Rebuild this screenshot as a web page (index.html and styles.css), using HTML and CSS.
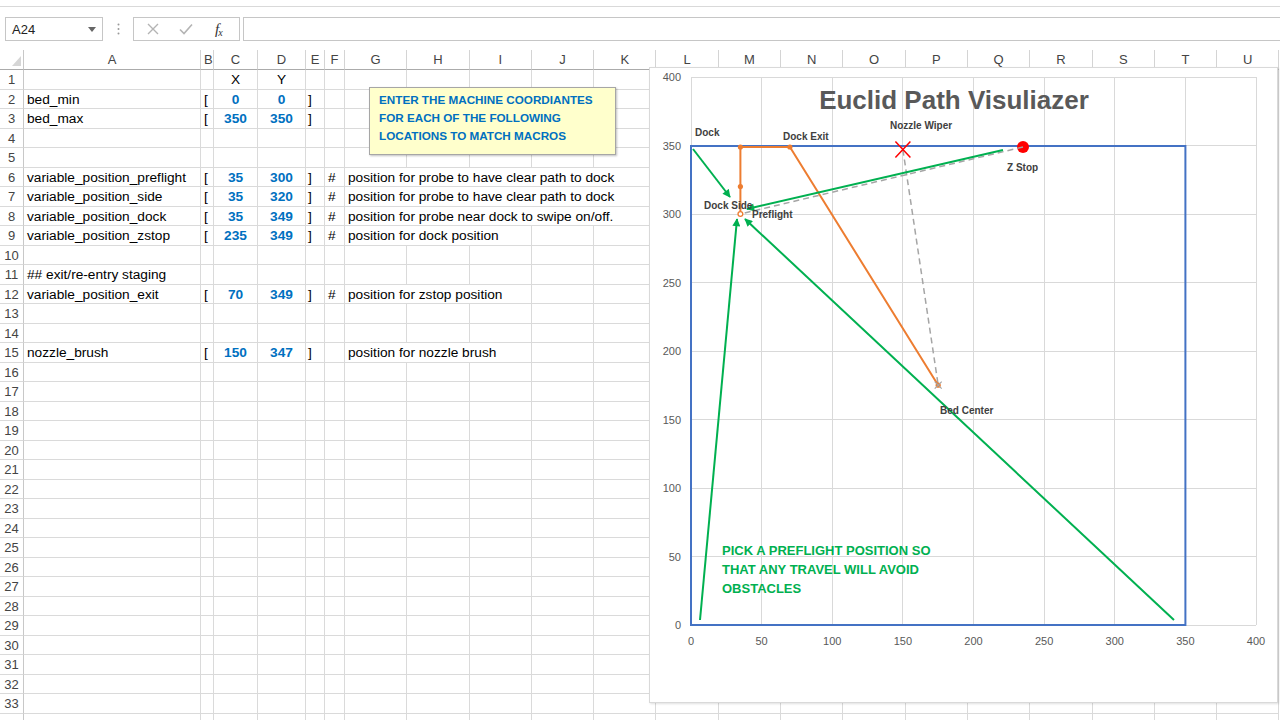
FILE: index.html
```html
<!DOCTYPE html>
<html lang="en">
<head>
<meta charset="utf-8">
<title>Euclid Path Visualizer</title>
<link rel="stylesheet" href="styles.css">
</head>
<body>
<div class="ribbon-edge"></div>
<div class="formula-bar">
  <div class="name-box"><span>A24</span><svg class="dd" width="8" height="5" viewBox="0 0 8 5"><path d="M0 0h8L4 5z" fill="#666"/></svg></div>
  <div class="grip"><svg width="3" height="12" viewBox="0 0 3 12"><circle cx="1.5" cy="1.5" r="1" fill="#999"/><circle cx="1.5" cy="6" r="1" fill="#999"/><circle cx="1.5" cy="10.5" r="1" fill="#999"/></svg></div>
  <div class="fx-buttons">
    <svg class="btn-x" width="12" height="12" viewBox="0 0 12 12"><path d="M1 1L11 11M11 1L1 11" stroke="#b4b4b4" stroke-width="1.4" fill="none"/></svg>
    <svg class="btn-ok" width="14" height="12" viewBox="0 0 14 12"><path d="M1 6.5L5 10.5L13 1.5" stroke="#b4b4b4" stroke-width="1.6" fill="none"/></svg>
    <span class="fx">f<span class="fx-sub">x</span></span>
  </div>
  <div class="formula-input"></div>
</div>

<div class="sheet-wrap">
  <div class="sheet">
    <div class="corner"><svg width="9" height="10" viewBox="0 0 9 10"><path d="M9 0V10H0z" fill="#d6d6d6"/></svg></div>
    <div class="ch">A</div><div class="ch">B</div><div class="ch">C</div><div class="ch">D</div><div class="ch">E</div><div class="ch">F</div><div class="ch">G</div><div class="ch">H</div><div class="ch">I</div><div class="ch">J</div><div class="ch">K</div><div class="ch">L</div><div class="ch">M</div><div class="ch">N</div><div class="ch">O</div><div class="ch">P</div><div class="ch">Q</div><div class="ch">R</div><div class="ch">S</div><div class="ch">T</div><div class="ch">U</div>

    <div class="rh">1</div><div></div><div></div><div class="ctr">X</div><div class="ctr">Y</div><div></div><div></div><div></div><div></div><div></div><div></div><div></div><div></div><div></div><div></div><div></div><div></div><div></div><div></div><div></div><div></div><div></div>

    <div class="rh">2</div><div>bed_min</div><div>[</div><div class="n">0</div><div class="n">0</div><div class="br">]</div><div></div><div></div><div></div><div></div><div></div><div></div><div></div><div></div><div></div><div></div><div></div><div></div><div></div><div></div><div></div><div></div>

    <div class="rh">3</div><div>bed_max</div><div>[</div><div class="n">350</div><div class="n">350</div><div class="br">]</div><div></div><div></div><div></div><div></div><div></div><div></div><div></div><div></div><div></div><div></div><div></div><div></div><div></div><div></div><div></div><div></div>

    <div class="rh">4</div><div></div><div></div><div></div><div></div><div></div><div></div><div></div><div></div><div></div><div></div><div></div><div></div><div></div><div></div><div></div><div></div><div></div><div></div><div></div><div></div><div></div>
    <div class="rh">5</div><div></div><div></div><div></div><div></div><div></div><div></div><div></div><div></div><div></div><div></div><div></div><div></div><div></div><div></div><div></div><div></div><div></div><div></div><div></div><div></div><div></div>

    <div class="rh">6</div><div>variable_position_preflight</div><div>[</div><div class="n">35</div><div class="n">300</div><div class="br">]</div><div>#</div><div class="span5">position for probe to have clear path to dock</div><div></div><div></div><div></div><div></div><div></div><div></div><div></div><div></div><div></div><div></div>

    <div class="rh">7</div><div>variable_position_side</div><div>[</div><div class="n">35</div><div class="n">320</div><div class="br">]</div><div>#</div><div class="span5">position for probe to have clear path to dock</div><div></div><div></div><div></div><div></div><div></div><div></div><div></div><div></div><div></div><div></div>

    <div class="rh">8</div><div>variable_position_dock</div><div>[</div><div class="n">35</div><div class="n">349</div><div class="br">]</div><div>#</div><div class="span5">position for probe near dock to swipe on/off.</div><div></div><div></div><div></div><div></div><div></div><div></div><div></div><div></div><div></div><div></div>

    <div class="rh">9</div><div>variable_position_zstop</div><div>[</div><div class="n">235</div><div class="n">349</div><div class="br">]</div><div>#</div><div class="span3">position for dock position</div><div></div><div></div><div></div><div></div><div></div><div></div><div></div><div></div><div></div><div></div><div></div><div></div>

    <div class="rh">10</div><div></div><div></div><div></div><div></div><div></div><div></div><div></div><div></div><div></div><div></div><div></div><div></div><div></div><div></div><div></div><div></div><div></div><div></div><div></div><div></div><div></div>

    <div class="rh">11</div><div>## exit/re-entry staging</div><div></div><div></div><div></div><div></div><div></div><div></div><div></div><div></div><div></div><div></div><div></div><div></div><div></div><div></div><div></div><div></div><div></div><div></div><div></div><div></div>

    <div class="rh">12</div><div>variable_position_exit</div><div>[</div><div class="n">70</div><div class="n">349</div><div class="br">]</div><div>#</div><div class="span3">position for zstop position</div><div></div><div></div><div></div><div></div><div></div><div></div><div></div><div></div><div></div><div></div><div></div><div></div>

    <div class="rh">13</div><div></div><div></div><div></div><div></div><div></div><div></div><div></div><div></div><div></div><div></div><div></div><div></div><div></div><div></div><div></div><div></div><div></div><div></div><div></div><div></div><div></div>
    <div class="rh">14</div><div></div><div></div><div></div><div></div><div></div><div></div><div></div><div></div><div></div><div></div><div></div><div></div><div></div><div></div><div></div><div></div><div></div><div></div><div></div><div></div><div></div>

    <div class="rh">15</div><div>nozzle_brush</div><div>[</div><div class="n">150</div><div class="n">347</div><div class="br">]</div><div></div><div class="span3">position for nozzle brush</div><div></div><div></div><div></div><div></div><div></div><div></div><div></div><div></div><div></div><div></div><div></div><div></div>

    <div class="rh">16</div><div></div><div></div><div></div><div></div><div></div><div></div><div></div><div></div><div></div><div></div><div></div><div></div><div></div><div></div><div></div><div></div><div></div><div></div><div></div><div></div><div></div>
    <div class="rh">17</div><div></div><div></div><div></div><div></div><div></div><div></div><div></div><div></div><div></div><div></div><div></div><div></div><div></div><div></div><div></div><div></div><div></div><div></div><div></div><div></div><div></div>
    <div class="rh">18</div><div></div><div></div><div></div><div></div><div></div><div></div><div></div><div></div><div></div><div></div><div></div><div></div><div></div><div></div><div></div><div></div><div></div><div></div><div></div><div></div><div></div>
    <div class="rh">19</div><div></div><div></div><div></div><div></div><div></div><div></div><div></div><div></div><div></div><div></div><div></div><div></div><div></div><div></div><div></div><div></div><div></div><div></div><div></div><div></div><div></div>
    <div class="rh">20</div><div></div><div></div><div></div><div></div><div></div><div></div><div></div><div></div><div></div><div></div><div></div><div></div><div></div><div></div><div></div><div></div><div></div><div></div><div></div><div></div><div></div>
    <div class="rh">21</div><div></div><div></div><div></div><div></div><div></div><div></div><div></div><div></div><div></div><div></div><div></div><div></div><div></div><div></div><div></div><div></div><div></div><div></div><div></div><div></div><div></div>
    <div class="rh">22</div><div></div><div></div><div></div><div></div><div></div><div></div><div></div><div></div><div></div><div></div><div></div><div></div><div></div><div></div><div></div><div></div><div></div><div></div><div></div><div></div><div></div>
    <div class="rh">23</div><div></div><div></div><div></div><div></div><div></div><div></div><div></div><div></div><div></div><div></div><div></div><div></div><div></div><div></div><div></div><div></div><div></div><div></div><div></div><div></div><div></div>
    <div class="rh">24</div><div></div><div></div><div></div><div></div><div></div><div></div><div></div><div></div><div></div><div></div><div></div><div></div><div></div><div></div><div></div><div></div><div></div><div></div><div></div><div></div><div></div>
    <div class="rh">25</div><div></div><div></div><div></div><div></div><div></div><div></div><div></div><div></div><div></div><div></div><div></div><div></div><div></div><div></div><div></div><div></div><div></div><div></div><div></div><div></div><div></div>
    <div class="rh">26</div><div></div><div></div><div></div><div></div><div></div><div></div><div></div><div></div><div></div><div></div><div></div><div></div><div></div><div></div><div></div><div></div><div></div><div></div><div></div><div></div><div></div>
    <div class="rh">27</div><div></div><div></div><div></div><div></div><div></div><div></div><div></div><div></div><div></div><div></div><div></div><div></div><div></div><div></div><div></div><div></div><div></div><div></div><div></div><div></div><div></div>
    <div class="rh">28</div><div></div><div></div><div></div><div></div><div></div><div></div><div></div><div></div><div></div><div></div><div></div><div></div><div></div><div></div><div></div><div></div><div></div><div></div><div></div><div></div><div></div>
    <div class="rh">29</div><div></div><div></div><div></div><div></div><div></div><div></div><div></div><div></div><div></div><div></div><div></div><div></div><div></div><div></div><div></div><div></div><div></div><div></div><div></div><div></div><div></div>
    <div class="rh">30</div><div></div><div></div><div></div><div></div><div></div><div></div><div></div><div></div><div></div><div></div><div></div><div></div><div></div><div></div><div></div><div></div><div></div><div></div><div></div><div></div><div></div>
    <div class="rh">31</div><div></div><div></div><div></div><div></div><div></div><div></div><div></div><div></div><div></div><div></div><div></div><div></div><div></div><div></div><div></div><div></div><div></div><div></div><div></div><div></div><div></div>
    <div class="rh">32</div><div></div><div></div><div></div><div></div><div></div><div></div><div></div><div></div><div></div><div></div><div></div><div></div><div></div><div></div><div></div><div></div><div></div><div></div><div></div><div></div><div></div>
    <div class="rh">33</div><div></div><div></div><div></div><div></div><div></div><div></div><div></div><div></div><div></div><div></div><div></div><div></div><div></div><div></div><div></div><div></div><div></div><div></div><div></div><div></div><div></div>
    <div class="rh"></div><div></div><div></div><div></div><div></div><div></div><div></div><div></div><div></div><div></div><div></div><div></div><div></div><div></div><div></div><div></div><div></div><div></div><div></div><div></div><div></div><div></div>
  </div>

  <div class="note">ENTER THE MACHINE COORDIANTES<br>FOR EACH OF THE FOLLOWING<br>LOCATIONS TO MATCH MACROS</div>

  <div class="chart">
    <svg class="plot" width="627" height="634" viewBox="0 0 627 634">
      <defs>
        <marker id="ah" viewBox="0 0 10 10" refX="9" refY="5" markerWidth="9" markerHeight="8" markerUnits="userSpaceOnUse" orient="auto">
          <path d="M0 0L10 5L0 10z" fill="#00b050"/>
        </marker>
      </defs>
      <g transform="translate(-650,-68)">
        <g class="grid" stroke="#d9d9d9" stroke-width="1" shape-rendering="crispEdges">
          <line x1="691" y1="77" x2="691" y2="625"/>
          <line x1="761.6" y1="77" x2="761.6" y2="625"/>
          <line x1="832.3" y1="77" x2="832.3" y2="625"/>
          <line x1="902.9" y1="77" x2="902.9" y2="625"/>
          <line x1="973.5" y1="77" x2="973.5" y2="625"/>
          <line x1="1044.1" y1="77" x2="1044.1" y2="625"/>
          <line x1="1114.8" y1="77" x2="1114.8" y2="625"/>
          <line x1="1185.4" y1="77" x2="1185.4" y2="625"/>
          <line x1="1256" y1="77" x2="1256" y2="625"/>
          <line x1="691" y1="77" x2="1256" y2="77"/>
          <line x1="691" y1="145.5" x2="1256" y2="145.5"/>
          <line x1="691" y1="214" x2="1256" y2="214"/>
          <line x1="691" y1="282.5" x2="1256" y2="282.5"/>
          <line x1="691" y1="351" x2="1256" y2="351"/>
          <line x1="691" y1="419.5" x2="1256" y2="419.5"/>
          <line x1="691" y1="488" x2="1256" y2="488"/>
          <line x1="691" y1="556.5" x2="1256" y2="556.5"/>
          <line x1="691" y1="625" x2="1256" y2="625"/>
        </g>

        <g class="axis-y" font-size="11" fill="#595959" text-anchor="end">
          <text x="681" y="81">400</text>
          <text x="681" y="149.5">350</text>
          <text x="681" y="218">300</text>
          <text x="681" y="286.5">250</text>
          <text x="681" y="355">200</text>
          <text x="681" y="423.5">150</text>
          <text x="681" y="492">100</text>
          <text x="681" y="560.5">50</text>
          <text x="681" y="629">0</text>
        </g>
        <g class="axis-x" font-size="11" fill="#595959" text-anchor="middle">
          <text x="691" y="645">0</text>
          <text x="761.6" y="645">50</text>
          <text x="832.3" y="645">100</text>
          <text x="902.9" y="645">150</text>
          <text x="973.5" y="645">200</text>
          <text x="1044.1" y="645">250</text>
          <text x="1114.8" y="645">300</text>
          <text x="1185.4" y="645">350</text>
          <text x="1256" y="645">400</text>
        </g>

        <text class="title" x="954" y="109" text-anchor="middle">Euclid Path Visuliazer</text>

        <rect x="691" y="146" width="494.4" height="479" fill="none" stroke="#4472c4" stroke-width="2"/>

        <circle cx="1023" cy="147" r="6" fill="#ff0000"/>

        <g stroke="#a5a5a5" stroke-width="1.5" stroke-dasharray="6 4" fill="none">
          <line x1="1023" y1="147" x2="740.4" y2="214"/>
          <line x1="902.9" y1="149.6" x2="938.2" y2="385.2"/>
        </g>

        <polyline points="740.4,214 740.4,186.6 740.4,147 789.9,147 938.2,385.2" fill="none" stroke="#ed7d31" stroke-width="2"/>
        <g fill="#ed7d31">
          <circle cx="740.4" cy="186.6" r="2.6"/>
          <circle cx="740.4" cy="147" r="2.6"/>
          <circle cx="789.9" cy="147" r="2.6"/>
          <circle cx="938.2" cy="385.2" r="2.6"/>
        </g>
        <circle cx="740.4" cy="214" r="2.4" fill="#fff" stroke="#ed7d31" stroke-width="1.3"/>
        <path d="M934.7 381.7L941.7 388.7M941.7 381.7L934.7 388.7" stroke="#a5a5a5" stroke-width="1.2"/>

        <path d="M895.4 141.6L910.4 157.6M910.4 141.6L895.4 157.6" stroke="#ff0000" stroke-width="1.5" fill="none"/>

        <g stroke="#00b050" stroke-width="2" fill="none" marker-end="url(#ah)">
          <line x1="693" y1="149" x2="730" y2="197"/>
          <line x1="1003" y1="150" x2="747" y2="209"/>
          <line x1="700" y1="620" x2="737" y2="219"/>
          <line x1="1174" y1="620" x2="745" y2="219"/>
        </g>

        <g class="lbl" font-size="10" font-weight="bold" fill="#404040">
          <text x="695" y="136">Dock</text>
          <text x="783" y="140">Dock Exit</text>
          <text x="890" y="129">Nozzle Wiper</text>
          <text x="1007" y="171">Z Stop</text>
          <text x="704" y="209">Dock Side</text>
          <text x="752" y="218">Preflight</text>
          <text x="940" y="414">Bed Center</text>
        </g>

        <g class="hint" font-size="13" font-weight="bold" fill="#00b050">
          <text x="722" y="555">PICK A PREFLIGHT POSITION SO</text>
          <text x="722" y="574">THAT ANY TRAVEL WILL AVOID</text>
          <text x="722" y="593">OBSTACLES</text>
        </g>
      </g>
    </svg>
  </div>
</div>
</body>
</html>
```

FILE: styles.css
```css
html, body {
  margin: 0;
  padding: 0;
  background: #fff;
}

body {
  width: 1280px;
  height: 720px;
  overflow: hidden;
  font-family: "Liberation Sans", Arial, sans-serif;
  color: #000;
}

.ribbon-edge {
  height: 6px;
  border-bottom: 1px solid #d9d9d9;
}

.formula-bar {
  display: flex;
  align-items: center;
  height: 24px;
  margin-top: 10px;
  padding-left: 5px;
}

.name-box {
  width: 98px;
  height: 24px;
  box-sizing: border-box;
  border: 1px solid #c6c6c6;
  display: flex;
  align-items: center;
  justify-content: space-between;
  padding: 0 6px 0 6px;
  font-size: 13px;
  color: #222;
}

.grip {
  width: 30px;
  display: flex;
  justify-content: center;
  align-items: center;
}

.fx-buttons {
  width: 107px;
  height: 24px;
  box-sizing: border-box;
  border: 1px solid #c6c6c6;
  display: flex;
  align-items: center;
  padding-left: 13px;
}

.btn-x {
  margin-right: 20px;
}

.btn-ok {
  margin-right: 22px;
}

.fx {
  font-family: "Liberation Serif", "Times New Roman", serif;
  font-style: italic;
  font-size: 15px;
  color: #333;
  letter-spacing: -1px;
}

.fx-sub {
  font-size: 10px;
  position: relative;
  top: 2px;
}

.formula-input {
  margin-left: 3px;
  flex: 1;
  height: 24px;
  box-sizing: border-box;
  border: 1px solid #c6c6c6;
  border-right: none;
}

.sheet-wrap {
  position: relative;
  margin-top: 9px;
}

.sheet {
  display: grid;
  grid-template-columns: 24px 177px 13px 44px 48px 19px 20px repeat(15, 62.3px);
  grid-template-rows: 20px;
  grid-auto-rows: 19.5px;
}

.sheet > div {
  box-sizing: border-box;
  border-right: 1px solid #dadada;
  border-bottom: 1px solid #dadada;
  padding: 0 3px;
  font-size: 13.7px;
  line-height: 20px;
  white-space: nowrap;
  overflow: hidden;
}

.sheet > .corner {
  border-bottom: 1px solid #ababab;
  border-right: 1px solid #c8c8c8;
  display: flex;
  align-items: flex-end;
  justify-content: flex-end;
  padding: 0 2px 3px 0;
}

.sheet > .ch {
  border-bottom: 1px solid #ababab;
  border-right: 1px solid #d4d4d4;
  text-align: center;
  font-size: 13px;
  color: #444;
  line-height: 19px;
}

.sheet > .rh {
  border-right: 1px solid #c8c8c8;
  border-bottom: 1px solid #dadada;
  text-align: center;
  font-size: 13px;
  color: #444;
  padding: 0;
}

.sheet > .ctr {
  text-align: center;
}

.sheet > .n {
  text-align: center;
  font-weight: bold;
  color: #0070c0;
}

.sheet > .br {
  padding-left: 2px;
}

.sheet > .span3 {
  grid-column: span 3;
}

.sheet > .span5 {
  grid-column: span 5;
}

.note {
  position: absolute;
  left: 369px;
  top: 37px;
  width: 247px;
  height: 68px;
  box-sizing: border-box;
  background: #ffffcc;
  border: 1px solid #a6a6a6;
  box-shadow: 1px 1px 2px rgba(0, 0, 0, 0.25);
  padding: 3px 9px 0 9px;
  font-size: 11.7px;
  font-weight: bold;
  line-height: 18px;
  color: #0070c0;
  white-space: nowrap;
}

.chart {
  position: absolute;
  left: 649px;
  top: 17px;
  width: 629px;
  height: 636px;
  box-sizing: border-box;
  border: 1px solid #d9d9d9;
  background: #fff;
  box-shadow: 1px 1px 2px rgba(0, 0, 0, 0.12);
}

.plot {
  display: block;
  font-family: "Liberation Sans", Arial, sans-serif;
}

.title {
  font-size: 26px;
  font-weight: bold;
  fill: #595959;
}
```
